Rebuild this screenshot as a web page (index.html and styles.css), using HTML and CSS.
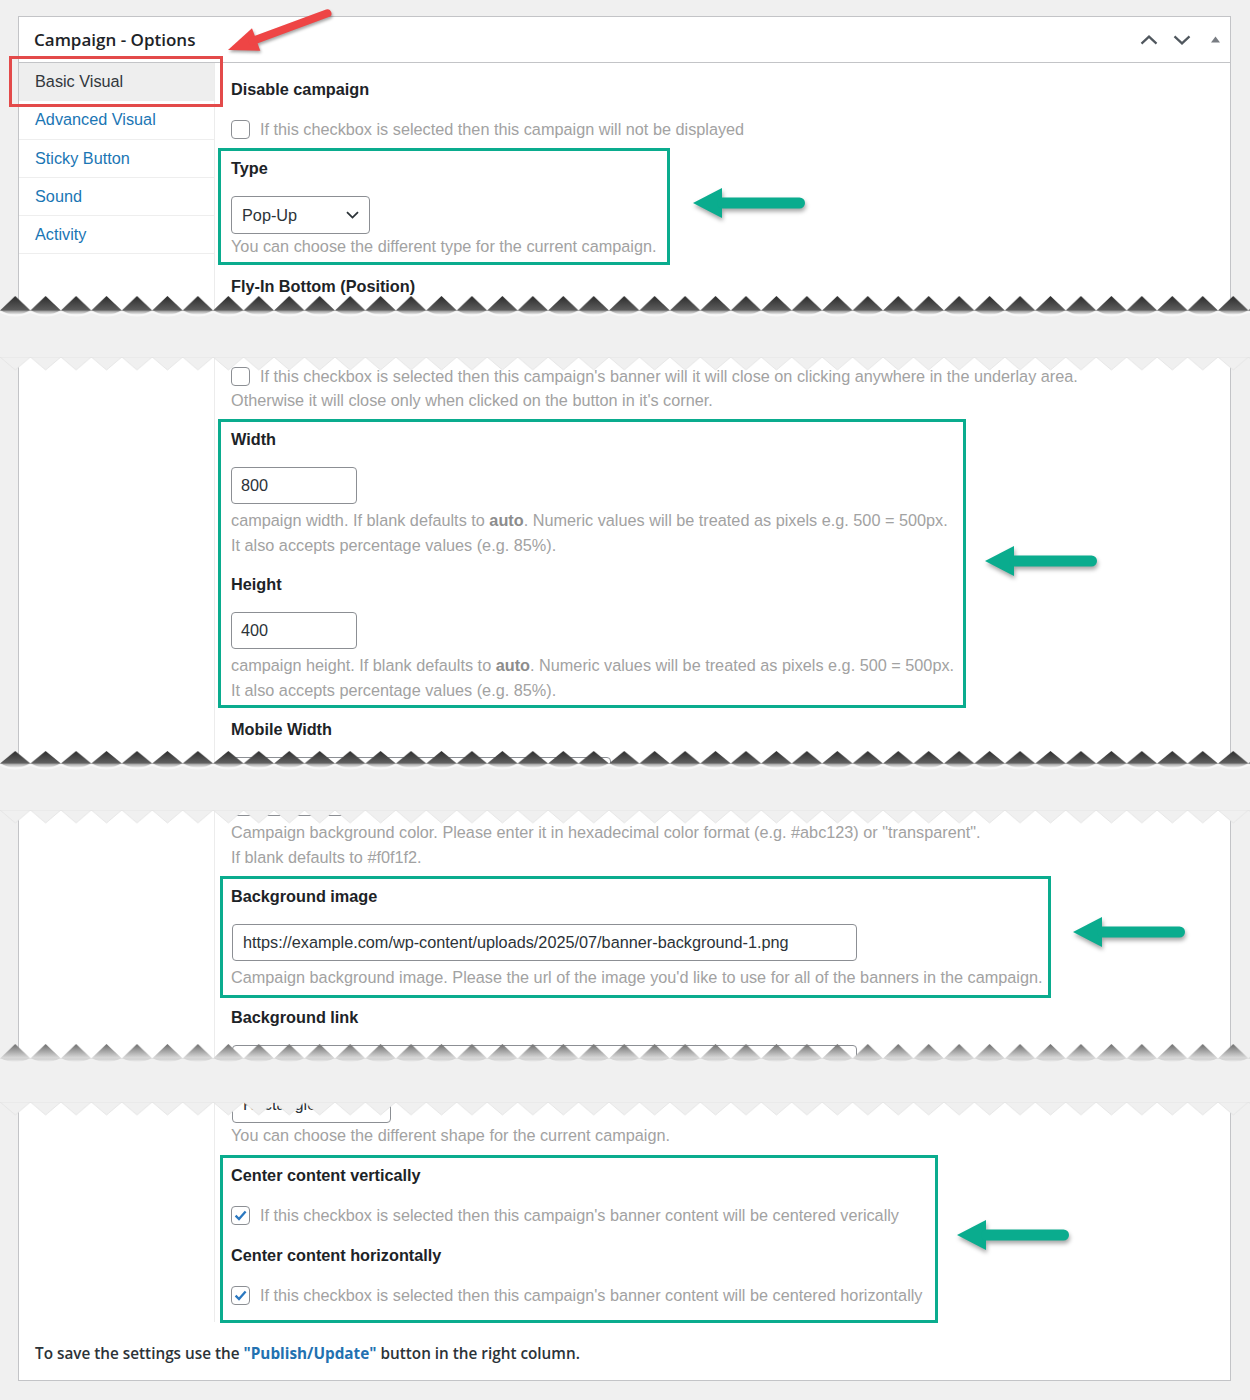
FILE: index.html
```html
<!DOCTYPE html>
<html lang="en">
<head>
<meta charset="utf-8">
<title>Campaign - Options</title>
<link rel="stylesheet" href="styles.css">
</head>
<body>
<main class="page">

  <section class="piece piece--one">
    <div class="card card--one">
      <header class="card-head">
        <h2 class="card-title">Campaign - Options</h2>
        <div class="head-actions">
          <svg class="head-chevron" width="18" height="10" viewBox="0 0 18 10"><path d="M1.5 8.6 9 1.6 16.5 8.6"/></svg>
          <svg class="head-chevron" width="18" height="10" viewBox="0 0 18 10"><path d="M1.5 1.4 9 8.4 16.5 1.4"/></svg>
          <svg class="head-toggle" width="9" height="7" viewBox="0 0 9 7"><polygon points="4.5,0.5 9,6.5 0,6.5"/></svg>
        </div>
      </header>
      <div class="card-body">
        <nav class="tabs">
          <a class="tab tab--active" href="#">Basic Visual</a>
          <a class="tab" href="#">Advanced Visual</a>
          <a class="tab" href="#">Sticky Button</a>
          <a class="tab" href="#">Sound</a>
          <a class="tab" href="#">Activity</a>
        </nav>
        <div class="fields">
          <div class="field">
            <div class="field-label">Disable campaign</div>
            <div class="check-row"><span class="check"></span>If this checkbox is selected then this campaign will not be displayed</div>
          </div>
          <div class="field boxed boxed--type">
            <div class="field-label">Type</div>
            <div class="select select--type"><span>Pop-Up</span><svg class="select-caret" width="13" height="8" viewBox="0 0 13 8"><path d="M1 1.2 6.5 6.6 12 1.2"/></svg></div>
            <div class="help">You can choose the different type for the current campaign.</div>
          </div>
          <div class="field">
            <div class="field-label">Fly-In Bottom (Position)</div>
          </div>
        </div>
      </div>
    </div>
    <svg class="tear tear--bottom" width="1250" height="26" viewBox="0 0 1250 26">
      <defs>
        <linearGradient id="tg1" x1="0" y1="0" x2="0" y2="1">
          <stop offset="0" stop-color="#2c2c2c"/>
          <stop offset="1" stop-color="#5e5e5e"/>
        </linearGradient>
        <linearGradient id="ts1" x1="0" y1="0" x2="0" y2="1">
          <stop offset="0" stop-color="#000" stop-opacity="0.45"/>
          <stop offset="1" stop-color="#000" stop-opacity="0"/>
        </linearGradient>
        <pattern id="tp1" width="30.45" height="26" patternUnits="userSpaceOnUse">
          <path d="M0 16 Q15.2 25 30.45 16 Z" fill="url(#ts1)"/>
          <path d="M0 17.5 Q15.2 24 30.45 17.5 L30.45 19 Q15.2 26 0 19 Z" fill="#ffffff" fill-opacity="0.55"/>
          <polygon points="0,16.5 15.2,2 30.45,16.5" fill="url(#tg1)"/>
        </pattern>
      </defs>
      <rect x="0" y="0" width="1250" height="26" fill="url(#tp1)"/>
    </svg>
    <div class="mark-red"></div>
    <svg class="arrow-red" width="130" height="65" viewBox="0 0 130 65">
      <g transform="translate(13 50) rotate(-20.25)">
        <polygon points="0,0 30,-12 30,12"/>
        <line x1="26" y1="0" x2="106" y2="0"/>
      </g>
    </svg>
    <svg class="arrow-green arrow-green--1" width="124" height="40" viewBox="0 0 124 40"><polygon points="4,17 33,2 33,32"/><rect x="28" y="11.5" width="88" height="11" rx="5.5"/></svg>
  </section>

  <section class="piece piece--two">
    <div class="card card--two">
      <div class="card-body">
        <div class="tabs"></div>
        <div class="fields">
          <div class="field">
            <div class="check-row"><span class="check"></span>If this checkbox is selected then this campaign's banner will it will close on clicking anywhere in the underlay area.<br>Otherwise it will close only when clicked on the button in it's corner.</div>
          </div>
          <div class="boxed boxed--size">
            <div class="field">
              <div class="field-label">Width</div>
              <div class="input input--short">800</div>
              <div class="help">campaign width. If blank defaults to <b>auto</b>. Numeric values will be treated as pixels e.g. 500 = 500px.<br>It also accepts percentage values (e.g. 85%).</div>
            </div>
            <div class="field">
              <div class="field-label">Height</div>
              <div class="input input--short">400</div>
              <div class="help">campaign height. If blank defaults to <b>auto</b>. Numeric values will be treated as pixels e.g. 500 = 500px.<br>It also accepts percentage values (e.g. 85%).</div>
            </div>
          </div>
          <div class="field">
            <div class="field-label">Mobile Width</div>
            <div class="input input--mobile"></div>
          </div>
        </div>
      </div>
    </div>
    <svg class="tear tear--top" width="1250" height="14" viewBox="0 0 1250 14">
      <defs>
        <pattern id="tt2" width="30.45" height="14" patternUnits="userSpaceOnUse">
          <polygon points="0,0 15.2,13 30.45,0" fill="#f0f0f0" stroke="#e2e2e2" stroke-width="0.8"/>
        </pattern>
      </defs>
      <rect x="0" y="0" width="1250" height="14" fill="url(#tt2)"/>
    </svg>
    <svg class="tear tear--bottom" width="1250" height="26" viewBox="0 0 1250 26">
      <defs>
        <linearGradient id="tg2" x1="0" y1="0" x2="0" y2="1">
          <stop offset="0" stop-color="#2e2e2e"/>
          <stop offset="1" stop-color="#626262"/>
        </linearGradient>
        <linearGradient id="ts2" x1="0" y1="0" x2="0" y2="1">
          <stop offset="0" stop-color="#000" stop-opacity="0.4"/>
          <stop offset="1" stop-color="#000" stop-opacity="0"/>
        </linearGradient>
        <pattern id="tp2" width="30.45" height="26" patternUnits="userSpaceOnUse">
          <path d="M0 16 Q15.2 25 30.45 16 Z" fill="url(#ts2)"/>
          <path d="M0 17.5 Q15.2 24 30.45 17.5 L30.45 19 Q15.2 26 0 19 Z" fill="#ffffff" fill-opacity="0.55"/>
          <polygon points="0,16.5 15.2,4 30.45,16.5" fill="url(#tg2)"/>
        </pattern>
      </defs>
      <rect x="0" y="0" width="1250" height="26" fill="url(#tp2)"/>
    </svg>
    <svg class="arrow-green arrow-green--2" width="124" height="40" viewBox="0 0 124 40"><polygon points="4,17 33,2 33,32"/><rect x="28" y="11.5" width="88" height="11" rx="5.5"/></svg>
  </section>

  <section class="piece piece--three">
    <div class="card card--three">
      <div class="card-body">
        <div class="tabs"></div>
        <div class="fields">
          <div class="field">
            <div class="input input--short input--lead"></div>
            <div class="help">Campaign background color. Please enter it in hexadecimal color format (e.g. #abc123) or "transparent".<br>If blank defaults to #f0f1f2.</div>
          </div>
          <div class="field boxed boxed--image">
            <div class="field-label">Background image</div>
            <div class="input input--wide">https://example.com/wp-content/uploads/2025/07/banner-background-1.png</div>
            <div class="help">Campaign background image. Please the url of the image you'd like to use for all of the banners in the campaign.</div>
          </div>
          <div class="field">
            <div class="field-label">Background link</div>
            <div class="input input--wide"></div>
          </div>
        </div>
      </div>
    </div>
    <svg class="tear tear--top" width="1250" height="14" viewBox="0 0 1250 14">
      <defs>
        <pattern id="tt3" width="30.45" height="14" patternUnits="userSpaceOnUse">
          <polygon points="0,0 15.2,13 30.45,0" fill="#f0f0f0" stroke="#e2e2e2" stroke-width="0.8"/>
        </pattern>
      </defs>
      <rect x="0" y="0" width="1250" height="14" fill="url(#tt3)"/>
    </svg>
    <svg class="tear tear--bottom" width="1250" height="26" viewBox="0 0 1250 26">
      <defs>
        <linearGradient id="tg3" x1="0" y1="0" x2="0" y2="1">
          <stop offset="0" stop-color="#6c6c6c"/>
          <stop offset="1" stop-color="#dedede"/>
        </linearGradient>
        <linearGradient id="ts3" x1="0" y1="0" x2="0" y2="1">
          <stop offset="0" stop-color="#000" stop-opacity="0.18"/>
          <stop offset="1" stop-color="#000" stop-opacity="0"/>
        </linearGradient>
        <pattern id="tp3" width="30.45" height="26" patternUnits="userSpaceOnUse">
          <path d="M0 16 Q15.2 24 30.45 16 Z" fill="url(#ts3)"/>
          <polygon points="0,16.5 15.2,2 30.45,16.5" fill="url(#tg3)"/>
        </pattern>
      </defs>
      <rect x="0" y="0" width="1250" height="26" fill="url(#tp3)"/>
    </svg>
    <svg class="arrow-green arrow-green--3" width="124" height="40" viewBox="0 0 124 40"><polygon points="4,17 33,2 33,32"/><rect x="28" y="11.5" width="88" height="11" rx="5.5"/></svg>
  </section>

  <section class="piece piece--four">
    <div class="card card--four">
      <div class="card-body">
        <div class="tabs"></div>
        <div class="fields">
          <div class="field">
            <div class="select select--shape"><span>Rectangle</span><svg class="select-caret" width="13" height="8" viewBox="0 0 13 8"><path d="M1 1.2 6.5 6.6 12 1.2"/></svg></div>
            <div class="help">You can choose the different shape for the current campaign.</div>
          </div>
          <div class="boxed boxed--center">
            <div class="field">
              <div class="field-label">Center content vertically</div>
              <div class="check-row"><span class="check"><svg width="17" height="17" viewBox="0 0 17 17"><path d="M3.6 8.6 7 12 13.6 4.6"/></svg></span>If this checkbox is selected then this campaign's banner content will be centered verically</div>
            </div>
            <div class="field">
              <div class="field-label">Center content horizontally</div>
              <div class="check-row"><span class="check"><svg width="17" height="17" viewBox="0 0 17 17"><path d="M3.6 8.6 7 12 13.6 4.6"/></svg></span>If this checkbox is selected then this campaign's banner content will be centered horizontally</div>
            </div>
          </div>
        </div>
      </div>
      <p class="card-foot">To save the settings use the <strong>"Publish/Update"</strong> button in the right column.</p>
    </div>
    <svg class="tear tear--top" width="1250" height="14" viewBox="0 0 1250 14">
      <defs>
        <pattern id="tt4" width="30.45" height="14" patternUnits="userSpaceOnUse">
          <polygon points="0,0 15.2,13 30.45,0" fill="#f0f0f0" stroke="#e2e2e2" stroke-width="0.8"/>
        </pattern>
      </defs>
      <rect x="0" y="0" width="1250" height="14" fill="url(#tt4)"/>
    </svg>
    <svg class="arrow-green arrow-green--4" width="124" height="40" viewBox="0 0 124 40"><polygon points="4,17 33,2 33,32"/><rect x="28" y="11.5" width="88" height="11" rx="5.5"/></svg>
  </section>

</main>
</body>
</html>
```

FILE: styles.css
```css
*,
*::before,
*::after {
  box-sizing: border-box;
}

html,
body {
  margin: 0;
  padding: 0;
}

body {
  background: #f0f0f0;
  font-family: "Liberation Sans", Arial, sans-serif;
  font-size: 16.25px;
  color: #1d2327;
}

.page {
  width: 1250px;
  padding: 16px 19px 19px 18px;
}

.piece {
  position: relative;
}

.piece--two,
.piece--three {
  margin-top: 47px;
}

.piece--four {
  margin-top: 44px;
}

/* card fragments */
.card {
  position: relative;
  display: flex;
  flex-direction: column;
  background: #fff;
  border-left: 1px solid #c3c4c7;
  border-right: 1px solid #c3c4c7;
  overflow: hidden;
}

.card--one {
  border-top: 1px solid #c3c4c7;
  height: 294px;
}

.card--two {
  height: 406px;
}

.card--three {
  height: 248px;
}

.card--four {
  border-bottom: 1px solid #c3c4c7;
}

.card-head {
  flex: none;
  display: flex;
  align-items: center;
  height: 46px;
  padding: 0 10px 0 15px;
  border-bottom: 1px solid #c3c4c7;
}

.card-title {
  flex: 1;
  margin: 0;
  font-family: "Open Sans", sans-serif;
  font-size: 17px;
  font-weight: 600;
  color: #1d2327;
}

.head-actions {
  display: flex;
  align-items: center;
}

.head-chevron {
  display: block;
  fill: none;
  stroke: #50575e;
  stroke-width: 2.2;
}

.head-chevron + .head-chevron {
  margin-left: 15px;
}

.head-toggle {
  display: block;
  margin-left: 20px;
  fill: #787c82;
}

.card-body {
  flex: 1;
  display: flex;
}

.tabs {
  flex: none;
  width: 196px;
  border-right: 1px solid #ececec;
}

.tab {
  display: block;
  height: 38.25px;
  line-height: 37px;
  padding-left: 16px;
  border-bottom: 1px solid #eeeeee;
  color: #1a76b4;
  text-decoration: none;
}

.tab--active {
  background: #eeeeee;
  color: #32373c;
}

.fields {
  flex: 1;
  min-width: 0;
  padding: 16px 16px 0 16px;
}

.card--two .fields {
  padding-top: 7px;
}

.card--three .fields,
.card--four .fields {
  padding-top: 0;
}

.card--four .fields {
  padding-bottom: 15px;
}

.field,
.boxed {
  margin-bottom: 17px;
}

.boxed--center > .field {
  margin-bottom: 18px;
}

.fields > :last-child,
.boxed > .field:last-child {
  margin-bottom: 0;
}

.field-label {
  font-weight: 700;
  line-height: 20px;
  margin-bottom: 18px;
  color: #1d2327;
}

.check-row {
  line-height: 24px;
  color: #a2a2a2;
}

.check {
  display: inline-block;
  width: 19px;
  height: 19px;
  margin-right: 10px;
  border: 1px solid #8c8f94;
  border-radius: 4px;
  background: #fff;
  vertical-align: -4px;
}

.check svg {
  display: block;
  fill: none;
  stroke: #2a78c0;
  stroke-width: 2.3;
}

.help {
  line-height: 25px;
  color: #a2a2a2;
}

.help b {
  color: #8c8c8c;
}

.select {
  display: flex;
  align-items: center;
  justify-content: space-between;
  height: 38px;
  padding: 0 10px;
  border: 1px solid #8c8f94;
  border-radius: 4px;
  background: #fff;
  color: #2c3338;
}

.select--type {
  width: 139px;
}

.select--shape {
  width: 159px;
  margin-top: -17px;
  margin-left: 1px;
}

.select-caret {
  display: block;
  fill: none;
  stroke: #2c3338;
  stroke-width: 1.8;
}

.input {
  display: flex;
  align-items: center;
  height: 37px;
  padding: 0 9px;
  border: 1px solid #8c8f94;
  border-radius: 4px;
  background: #fff;
  color: #2c3338;
  white-space: nowrap;
}

.input + .help {
  margin-top: 4px;
  line-height: 24.5px;
}

.input--short {
  width: 126px;
}

.input--mobile {
  width: 380px;
}

.input--wide {
  width: 625px;
  margin-left: 1px;
  padding-left: 10px;
}

.input--lead {
  margin-top: -31px;
}

/* annotation boxes */
.boxed {
  position: relative;
}

.boxed::before {
  content: "";
  position: absolute;
  left: -13px;
  top: -10px;
  bottom: -6px;
  border: 3px solid #0aac8e;
  pointer-events: none;
}

.boxed--type::before {
  width: 452px;
}

.boxed--size::before {
  width: 748px;
}

.boxed--image::before {
  left: -11px;
  bottom: -8px;
  width: 831px;
}

.boxed--center::before {
  left: -11px;
  bottom: -16px;
  width: 718px;
}

.card-foot {
  margin: 0;
  padding: 21px 16px 17px 16px;
  font-family: "Open Sans", sans-serif;
  font-size: 15.3px;
  font-weight: 600;
  line-height: 20px;
  color: #2c3338;
}

.card-foot strong {
  color: #2271b1;
  font-weight: 700;
}

/* torn edges */
.tear {
  position: absolute;
  left: -18px;
  z-index: 3;
  display: block;
}

.tear--bottom {
  bottom: -10px;
}

.tear--top {
  top: 0;
}

/* red annotation */
.mark-red {
  position: absolute;
  left: -9px;
  top: 40px;
  width: 214px;
  height: 51px;
  border: 3px solid #e34a4a;
  z-index: 4;
}

.arrow-red {
  position: absolute;
  left: 197px;
  top: -16px;
  z-index: 4;
  fill: #ee4545;
  stroke: #ee4545;
  stroke-width: 8;
  stroke-linecap: round;
  filter: drop-shadow(1px 2px 1.5px rgba(0, 0, 0, 0.35));
}

.arrow-red polygon {
  stroke: none;
}

/* green annotation arrows */
.arrow-green {
  position: absolute;
  z-index: 4;
  fill: #0aac8e;
  filter: drop-shadow(1px 3px 2px rgba(0, 0, 0, 0.35));
}

.arrow-green--1 {
  left: 671px;
  top: 170px;
}

.arrow-green--2 {
  left: 963px;
  top: 187px;
}

.arrow-green--3 {
  left: 1051px;
  top: 105px;
}

.arrow-green--4 {
  left: 935px;
  top: 116px;
}
```
